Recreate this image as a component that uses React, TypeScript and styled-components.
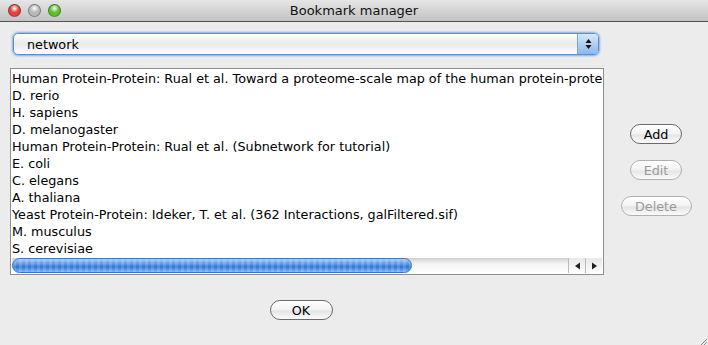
import React from 'react'
import styled, { createGlobalStyle } from 'styled-components'

const GlobalStyle = createGlobalStyle`
html, body { margin:0; padding:0; background:#ececec; }
body { font-family:"DejaVu Sans", "Liberation Sans", sans-serif; }
`

const items = [
    'Human Protein-Protein: Rual et al. Toward a proteome-scale map of the human protein-prote',
    'D. rerio',
    'H. sapiens',
    'D. melanogaster',
    'Human Protein-Protein: Rual et al. (Subnetwork for tutorial)',
    'E. coli',
    'C. elegans',
    'A. thaliana',
    'Yeast Protein-Protein: Ideker, T. et al. (362 Interactions, galFiltered.sif)',
    'M. musculus',
    'S. cerevisiae',
]

function App() {
    return (
        <Window>
        <GlobalStyle />
        <TitleBar>
            <Lights>
                <Light color="#e0443e" />
                <Light color="#b8b8b8" />
                <Light color="#5fbf2f" />
            </Lights>
            <Title>Bookmark manager</Title>
        </TitleBar>
        <Body>
            <Combo>
                <span>network</span>
                <ComboArrow>
                    <svg width="7" height="12" viewBox="0 0 7 12">
                        <path d="M3.5 1 L6.5 5 L0.5 5 Z" fill="#111" />
                        <path d="M3.5 11 L6.5 7 L0.5 7 Z" fill="#111" />
                    </svg>
                </ComboArrow>
            </Combo>
            <Middle>
                <ListBox>
                    <Rows>
                        {items.map((t) => <Row key={t}>{t}</Row>)}
                    </Rows>
                    <HScroll>
                        <Track>
                            <Thumb />
                        </Track>
                        <Arrow>
                            <svg width="7" height="8" viewBox="0 0 7 8"><path d="M1 4 L6 0.5 L6 7.5 Z" fill="#222" /></svg>
                        </Arrow>
                        <Arrow>
                            <svg width="7" height="8" viewBox="0 0 7 8"><path d="M6 4 L1 0.5 L1 7.5 Z" fill="#222" /></svg>
                        </Arrow>
                    </HScroll>
                </ListBox>
                <Side>
                    <PillButton width={52}>Add</PillButton>
                    <PillButton width={52} disabled>Edit</PillButton>
                    <PillButton width={71} disabled>Delete</PillButton>
                </Side>
            </Middle>
            <Footer>
                <PillButton width={63}>OK</PillButton>
            </Footer>
        </Body>
        <Grip>
            <svg width="12" height="12" viewBox="0 0 12 12">
                <path d="M11 3 L3 11 M11 6 L6 11 M11 9 L9 11" stroke="#8a8a8a" strokeWidth="1" />
            </svg>
        </Grip>
        </Window>
    )
}

export default App

const Window = styled.div`
width:708px;
height:345px;
position:relative;
background:#ececec;
overflow:hidden;
`
const TitleBar = styled.div`
height:21px;
border-bottom:1px solid #555;
background:linear-gradient(#e6e6e6, #c2c2c2);
display:flex;
align-items:center;
position:relative;
`
const Lights = styled.div`
display:flex;
gap:7px;
padding-left:8px;
`
const Light = styled.div<{ color: string }>`
width:13px;
height:13px;
border-radius:50%;
box-sizing:border-box;
border:1px solid rgba(0,0,0,0.35);
background:radial-gradient(circle at 50% 30%, #fff 0%, ${p => p.color} 45%, ${p => p.color} 100%);
`
const Title = styled.div`
position:absolute;
left:0;
right:0;
text-align:center;
font-size:13px;
color:#111;
`
const Body = styled.div`
padding:11px 0 0 0;
display:flex;
flex-direction:column;
`
const Combo = styled.div`
margin-left:13px;
width:586px;
height:22px;
box-sizing:border-box;
border:1px solid #5a8fd0;
border-radius:5px;
box-shadow:0 0 2px 1px rgba(90,150,230,0.7);
background:linear-gradient(#fff 0%, #e8e8e8 50%, #fff 100%);
display:flex;
align-items:center;
font-size:12.75px;
color:#000;
span{
    flex:1;
    padding-left:13px;
}
`
const ComboArrow = styled.div`
width:20px;
height:20px;
border-left:1px solid #7aa4d8;
border-radius:0 4px 4px 0;
background:linear-gradient(#d8e8fa, #8bb8ec);
display:flex;
align-items:center;
justify-content:center;
`
const Middle = styled.div`
display:flex;
margin-top:13px;
`
const ListBox = styled.div`
margin-left:10px;
width:594px;
height:207px;
box-sizing:border-box;
border:1px solid #8e8e8e;
background:#fff;
display:flex;
flex-direction:column;
`
const Rows = styled.div`
flex:1;
overflow:hidden;
padding-top:1px;
`
const Row = styled.div`
height:17px;
line-height:17px;
padding-left:1px;
font-size:12.75px;
color:#000;
white-space:nowrap;
`
const HScroll = styled.div`
height:15px;
margin:0 1px 1px 1px;
display:flex;
background:linear-gradient(#cfcfcf, #f4f4f4 40%, #fff);
`
const Track = styled.div`
flex:1;
display:flex;
padding-right:10px;
border-radius:0 8px 8px 0;
`
const Thumb = styled.div`
width:400px;
height:15px;
box-sizing:border-box;
border-radius:8px;
border:1px solid #3d73c4;
background:repeating-linear-gradient(90deg, rgba(255,255,255,0.15) 0 3px, rgba(255,255,255,0) 3px 6px),
linear-gradient(#a8cdf5 0%, #4d8fe0 45%, #2f74d4 60%, #7eb6f0 100%);
`
const Arrow = styled.div`
width:16px;
display:flex;
align-items:center;
justify-content:center;
border-left:1px solid #bbb;
background:linear-gradient(#e8e8e8, #fdfdfd);
`
const Side = styled.div`
flex:1;
display:flex;
flex-direction:column;
align-items:center;
padding-top:56px;
gap:16px;
`
const PillButton = styled.div<{ width: number; disabled?: boolean }>`
width:${p => p.width}px;
height:20px;
box-sizing:border-box;
border-radius:10px;
border:1px solid ${p => p.disabled ? '#b0b0b0' : '#6a6a6a'};
background:linear-gradient(#fff 0%, #f2f2f2 50%, #e4e4e4 55%, #fbfbfb 100%);
display:flex;
align-items:center;
justify-content:center;
font-size:12.75px;
color:${p => p.disabled ? '#9a9a9a' : '#000'};
`
const Footer = styled.div`
display:flex;
justify-content:center;
margin-top:25px;
margin-right:106px;
`
const Grip = styled.div`
position:absolute;
right:0;
bottom:0;
width:12px;
height:12px;
`
